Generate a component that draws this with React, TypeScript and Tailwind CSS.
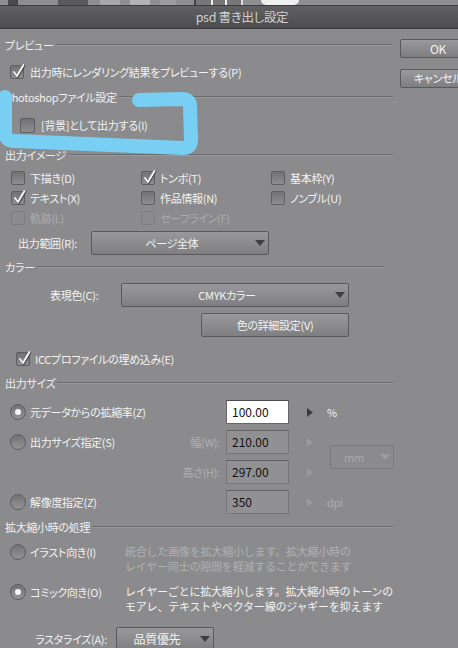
import React from "react";

const FONT = "font-['Noto_Sans_CJK_JP','Noto_Sans',sans-serif] [font-feature-settings:'palt'] font-normal tracking-[-0.3px]";
const DESC = "[font-feature-settings:normal] tracking-[-0.2px]";

function Check({ checked = false, disabled = false, size = 14 }: { checked?: boolean; disabled?: boolean; size?: number }) {
  return (
    <div
      className={
        "relative shrink-0 rounded-[2px] border " +
        (disabled
          ? "border-[#7c7c7e] bg-[#8b8b8d]"
          : "border-[#5e5e60] bg-gradient-to-b from-[#727274] to-[#8e8e90]")
      }
      style={{ width: size, height: size }}
    >
      {checked && (
        <svg className="absolute left-[1px] top-[-3px] overflow-visible" width="13" height="15" viewBox="0 0 13 15">
          <path d="M2 9 L5 13 L11.5 2" fill="none" stroke="#3f3f40" strokeWidth="2.4" strokeLinecap="round" strokeLinejoin="round" transform="translate(0.6,0.6)" />
          <path d="M2 9 L5 13 L11.5 2" fill="none" stroke="#f4f4f4" strokeWidth="2" strokeLinecap="round" strokeLinejoin="round" />
        </svg>
      )}
    </div>
  );
}

function Radio({ selected = false }: { selected?: boolean }) {
  return (
    <div className="flex h-4 w-4 shrink-0 items-center justify-center rounded-full border border-[#5e5e60] bg-gradient-to-b from-[#727274] to-[#959597]">
      {selected && <div className="h-[6px] w-[6px] rounded-full bg-[#f6f6f6]" />}
    </div>
  );
}

function Arrow({ disabled = false }: { disabled?: boolean }) {
  return (
    <svg width="10" height="6" viewBox="0 0 10 6">
      <path d="M0 0 L10 0 L5 6 Z" fill={disabled ? "#9c9c9e" : "#3e3e40"} />
    </svg>
  );
}

function Dropdown({ label, className, disabled = false }: { label: string; className: string; disabled?: boolean }) {
  return (
    <div
      className={
        "flex h-6 items-center rounded-[2px] border " +
        (disabled
          ? "border-[#7a7a7c] bg-[#8b8b8d] text-[#a9a9ab] "
          : "border-[#5a5a5c] bg-gradient-to-b from-[#99999b] to-[#7f7f81] text-[#f2f2f2] ") +
        className
      }
    >
      <div className="flex-1 text-center leading-none">{label}</div>
      <div className="flex w-[16px] justify-end pr-[3px]">
        <Arrow disabled={disabled} />
      </div>
    </div>
  );
}

function Button({ label, className }: { label: string; className: string }) {
  return (
    <div
      className={
        "flex items-center justify-center whitespace-nowrap rounded-[2px] border border-[#5a5a5c] bg-gradient-to-b from-[#99999b] to-[#7f7f81] text-[#f2f2f2] " +
        className
      }
    >
      {label}
    </div>
  );
}

function Header({ label, end = 393 }: { label: string; end?: number }) {
  return (
    <div className="flex h-5 items-center" style={{ width: end }}>
      <span className="pl-[5px] pr-[2px] text-[#f0f0f0]">{label}</span>
      <div className="h-[2px] flex-1 border-t border-b border-t-[#6c6c6e] border-b-[#9a9a9c]" />
    </div>
  );
}

function Tri({ disabled = false }: { disabled?: boolean }) {
  return (
    <svg width="6" height="9" viewBox="0 0 6 9">
      <path d="M0 0 L6 4.5 L0 9 Z" fill={disabled ? "#9a9a9c" : "#3c3c3e"} />
    </svg>
  );
}

function Input({ value, white = false }: { value: string; white?: boolean }) {
  return (
    <div
      className={
        "flex h-6 w-[63px] items-center border pl-[5px] text-[12px] tracking-normal text-[#111] " +
        (white ? "border-[#666] border-t-[#4a4a4a] bg-white" : "border-[#767678] border-t-[#626264] bg-[#919193]")
      }
    >
      {value}
    </div>
  );
}

export default function App() {
  return (
    <div className={"relative h-[648px] w-[458px] overflow-hidden whitespace-nowrap bg-[#8b8b8d] text-[11px] " + FONT}>
      <div className="w-[484px]">
        {/* toolbar remnant strip */}
        <div className="flex h-[5px] items-stretch bg-[#8e8e90]">
          <div className="w-[8px]" />
          <div className="w-[10px] bg-[#4a4a4a]" />
          <div className="w-[40px]" />
          <div className="w-[30px] bg-[#5a5a5a]" />
          <div className="w-[12px]" />
          <div className="w-[20px] bg-[#a8a8a8]" />
          <div className="w-[10px]" />
          <div className="w-[20px] bg-[#b2b2b2]" />
          <div className="w-[10px]" />
          <div className="w-[16px] bg-[#9e9e9e]" />
          <div className="w-[18px]" />
          <div className="w-[2px] bg-[#444]" />
          <div className="w-[15px] bg-[#777]" />
          <div className="w-[2px] bg-[#eee]" />
          <div className="w-[12px] bg-[#777]" />
          <div className="w-[2px] bg-[#eee]" />
          <div className="w-[14px] bg-[#777]" />
          <div className="w-[2px] bg-[#ddd]" />
          <div className="w-[18px]" />
          <div className="w-[38px] rounded-b-[6px] bg-[#efefef]" />
        </div>
        {/* title bar */}
        <div className="flex h-[24px] items-center justify-center border-t border-b border-t-[#3c3c3e] border-b-[#3a3a3c] bg-gradient-to-b from-[#616163] to-[#4c4c4e] text-[12.5px] text-[#cfcfcf]">
          psd 書き出し設定
        </div>

        <div className="flex">
          {/* left content */}
          <div className="w-[398px]">
            <div className="mt-[6px]">
              <Header label="プレビュー" />
            </div>
            <div className="mt-[7px] flex h-5 items-center pl-[10px] text-[#f2f2f2]">
              <Check checked />
              <span className="pl-[6px]">出力時にレンダリング結果をプレビューする(P)</span>
            </div>

            <div className="mt-[5px]">
              <Header label="Photoshopファイル設定" />
            </div>
            <div className="mt-[8px] flex h-5 items-center pl-[20px] text-[#f2f2f2]">
              <Check size={15} />
              <span className="pl-[6px]">[背景]として出力する(I)</span>
            </div>

            <div className="mt-[10px]">
              <Header label="出力イメージ" />
            </div>
            <div className="mt-[3px] grid grid-cols-[130px_130px_130px] pl-[11px]">
              {[
                { l: "下描き(D)", c: false, d: false },
                { l: "トンボ(T)", c: true, d: false },
                { l: "基本枠(Y)", c: false, d: false },
                { l: "テキスト(X)", c: true, d: false },
                { l: "作品情報(N)", c: false, d: false },
                { l: "ノンブル(U)", c: false, d: false },
                { l: "軌跡(L)", c: false, d: true },
                { l: "セーフライン(F)", c: false, d: true },
              ].map((it) => (
                <div key={it.l} className="flex h-5 items-center">
                  <Check checked={it.c} disabled={it.d} />
                  <span className={"pl-[5px] " + (it.d ? "text-[#acacae]" : "text-[#f2f2f2]")}>{it.l}</span>
                </div>
              ))}
            </div>
            <div className="mt-[3px] flex h-6 items-center text-[#f2f2f2]">
              <span className="w-[91px] pl-[18px]">出力範囲(R):</span>
              <Dropdown label="ページ全体" className="w-[178px]" />
            </div>

            <div className="mt-[2px]">
              <Header label="カラー" end={384} />
            </div>
            <div className="mt-[6px] flex h-6 items-center text-[#f2f2f2]">
              <span className="w-[121px] pl-[50px]">表現色(C):</span>
              <Dropdown label="CMYKカラー" className="w-[228px]" />
            </div>
            <div className="mt-[6px] flex pl-[201px]">
              <Button label="色の詳細設定(V)" className="h-6 w-[148px]" />
            </div>
            <div className="mt-[12px] flex h-5 items-center pl-[16px] text-[#f2f2f2]">
              <Check checked />
              <span className="pl-[5px]">ICCプロファイルの埋め込み(E)</span>
            </div>

            <div className="mt-[4px]">
              <Header label="出力サイズ" />
            </div>
            {/* row 1 */}
            <div className="mt-[7px] flex h-6 items-center text-[#f2f2f2]">
              <div className="flex w-[226px] items-center pl-[10px]">
                <Radio selected />
                <span className="pl-[4px]">元データからの拡縮率(Z)</span>
              </div>
              <Input value="100.00" white />
              <div className="flex w-[38px] justify-center pl-[4px]">
                <Tri />
              </div>
              <span>%</span>
            </div>
            {/* rows 2-3 */}
            <div className="mt-[6px] flex">
              <div className="flex w-[330px] flex-col gap-[6px]">
                <div className="flex h-6 items-center">
                  <div className="flex w-[140px] items-center pl-[10px] text-[#f2f2f2]">
                    <Radio />
                    <span className="pl-[4px]">出力サイズ指定(S)</span>
                  </div>
                  <span className="w-[80px] text-right text-[#b0b0b2]">幅(W):</span>
                  <div className="w-[6px]" />
                  <Input value="210.00" />
                  <div className="flex w-[38px] justify-center pl-[4px]">
                    <Tri disabled />
                  </div>
                </div>
                <div className="flex h-6 items-center">
                  <span className="w-[220px] text-right text-[#b0b0b2]">高さ(H):</span>
                  <div className="w-[6px]" />
                  <Input value="297.00" />
                  <div className="flex w-[38px] justify-center pl-[4px]">
                    <Tri disabled />
                  </div>
                </div>
              </div>
              <div className="flex items-center">
                <Dropdown label="mm" disabled className="w-[64px]" />
              </div>
            </div>
            {/* row 4 */}
            <div className="mt-[6px] flex h-6 items-center">
              <div className="flex w-[226px] items-center pl-[10px] text-[#f2f2f2]">
                <Radio />
                <span className="pl-[4px]">解像度指定(Z)</span>
              </div>
              <Input value="350" />
              <div className="flex w-[38px] justify-center pl-[4px]">
                <Tri disabled />
              </div>
              <span className="text-[#acacae]">dpi</span>
            </div>

            <div className="mt-[3px]">
              <Header label="拡大縮小時の処理" />
            </div>
            <div className="mt-[7px] flex leading-[15px]">
              <div className="flex w-[125px] shrink-0 items-center self-start pl-[10px] text-[#f2f2f2]">
                <Radio />
                <span className="pl-[4px]">イラスト向き(I)</span>
              </div>
              <div className={"text-[#b0b0b2] " + DESC}>
                <div>統合した画像を拡大縮小します。拡大縮小時の</div>
                <div>レイヤー同士の隙間を軽減することができます</div>
              </div>
            </div>
            <div className="mt-[10px] flex leading-[15px] text-[#f2f2f2]">
              <div className="flex w-[125px] shrink-0 items-center self-start pl-[10px]">
                <Radio selected />
                <span className="pl-[4px]">コミック向き(O)</span>
              </div>
              <div className={DESC}>
                <div>レイヤーごとに拡大縮小します。拡大縮小時のトーンの</div>
                <div>モアレ、テキストやベクター線のジャギーを抑えます</div>
              </div>
            </div>
            <div className="mt-[13px] flex h-6 items-center text-[#f2f2f2]">
              <span className="w-[116px] pl-[35px]">ラスタライズ(A):</span>
              <Dropdown label="品質優先" className="w-[98px] text-[12px]" />
            </div>
          </div>

          {/* right buttons */}
          <div className="flex flex-col pl-[2px] pt-[10px]">
            <Button label="OK" className="h-[19px] w-[76px] text-[12px]" />
            <Button label="キャンセル" className="mt-[11px] h-[19px] w-[76px]" />
          </div>
        </div>
      </div>

      {/* blue marker highlight drawn over the screenshot */}
      <svg className="pointer-events-none absolute left-0 top-0" width="458" height="648" viewBox="0 0 458 648">
        <path
          d="M5 97 L5 132 Q5 141 15 141 L183 148 Q191 148 191 140 L190 106 Q190 99 182 99 L139 100"
          fill="none"
          stroke="#78cff3"
          strokeWidth="14"
          strokeLinecap="round"
          strokeLinejoin="round"
        />
      </svg>
    </div>
  );
}
